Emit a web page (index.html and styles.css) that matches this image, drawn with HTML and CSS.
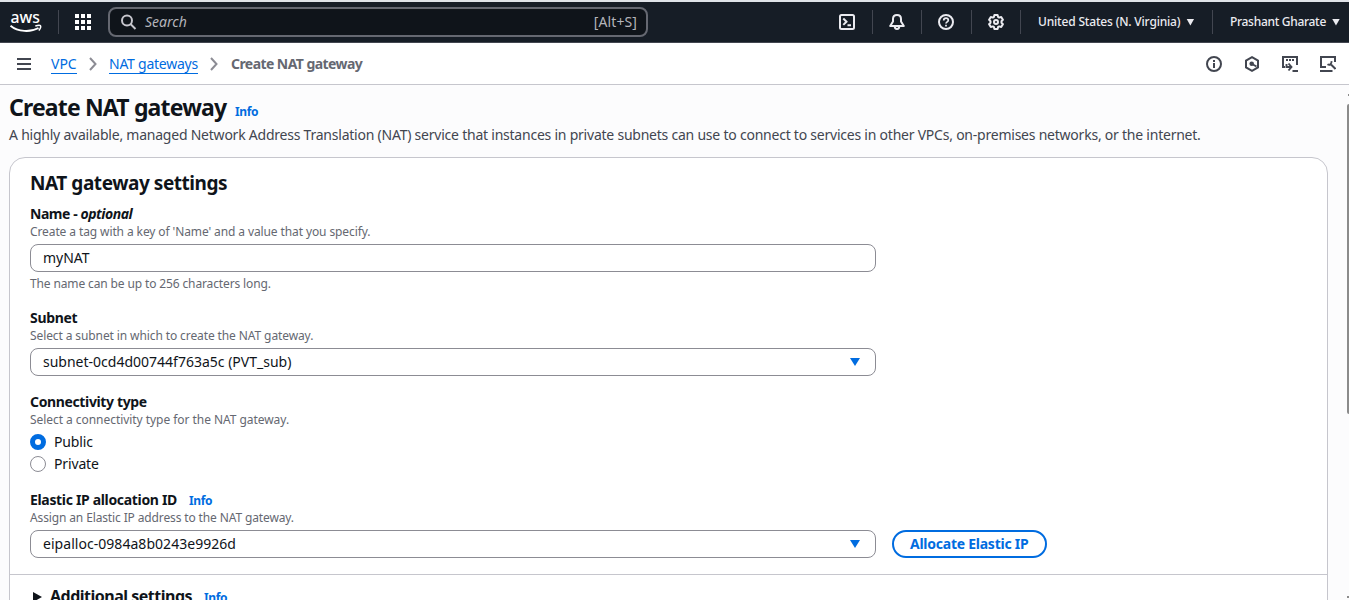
FILE: index.html
```
<!DOCTYPE html>
<html lang="en">
<head>
<meta charset="utf-8">
<title>Create NAT gateway</title>
<link rel="stylesheet" href="styles.css">
</head>
<body>
<header class="topbar">
  <svg class="logo" width="34" height="24" viewBox="0 0 34 24"><text class="logo-text" x="0.500" y="12.500" textLength="29.500" lengthAdjust="spacingAndGlyphs">aws</text><path d="M0.500 15.700C8 22 20.500 22.500 28.500 18" fill="none" stroke="#fff" stroke-width="1.900"/><path d="M25.300 16C28 15.200 30 15.100 30.500 15.800C31 16.600 30 19 28.800 20.500" fill="none" stroke="#fff" stroke-width="1.500"/></svg>
  <span class="rule rule-logo"></span>
  <svg class="grid-icon" width="16" height="16" viewBox="0 0 16 16" fill="#fff"><path d="M0 0h4v4H0zM6 0h4v4H6zM12 0h4v4h-4zM0 6h4v4H0zM6 6h4v4H6zM12 6h4v4h-4zM0 12h4v4H0zM6 12h4v4H6zM12 12h4v4h-4z"/></svg>
  <div class="search">
    <svg width="16" height="16" viewBox="0 0 16 16" fill="none" stroke="#c6c6cd" stroke-width="2"><circle cx="6" cy="6.500" r="5"/><path d="M9.500 10l5 5"/></svg>
    <span class="search-label">Search</span>
    <span class="t-key">[Alt+S]</span>
  </div>
  <div class="tools">
    <span class="tool"><svg width="16" height="16" viewBox="0 0 16 16" fill="none" stroke="#ebebf0" stroke-width="2"><rect x="1" y="1" width="14" height="14" rx="1.500"/><path d="M4.300 4.500L7.500 7.700l-3.200 3.200M8.500 11.200H12"/></svg></span>
    <span class="tool"><svg width="16" height="16" viewBox="0 0 16 16" fill="none" stroke="#ebebf0" stroke-width="2" stroke-linejoin="round"><path d="M8 1C5.300 1 4 2.800 4 5v2.500L1.200 12h13.600L12 7.500V5C12 2.800 10.700 1 8 1z"/><path d="M5.700 12c0 4 4.600 4 4.600 0"/></svg></span>
    <span class="tool"><svg width="16" height="16" viewBox="0 0 16 16" fill="none" stroke="#ebebf0" stroke-width="2"><circle cx="8" cy="8" r="7"/><path d="M5.700 6.500C5.700 3.200 10.300 3.500 10.300 6.200C10.300 7.900 8 7.800 8 9.600M8 10.700v1.700" stroke-width="1.700"/></svg></span>
    <span class="tool"><svg width="16" height="16" viewBox="0 0 16 16" fill="none" stroke="#ebebf0" stroke-width="2" stroke-linejoin="round"><path d="M6.400 1h3.200l.5 2 1.100.6 2-.6 1.700 2.800L13.500 7.300v1.400l1.400 1.500-1.700 2.800-2-.6-1.100.6-.5 2H6.400l-.5-2-1.100-.6-2 .6-1.700-2.800L2.500 8.700V7.300L1.100 5.800 2.800 3l2 .6L5.900 3z"/><circle cx="8" cy="8" r="2"/></svg></span>
    <span class="account region"><span class="t-region">United States (N. Virginia)</span><i class="caret"></i></span>
    <span class="account user"><span class="t-user">Prashant Gharate</span><i class="caret"></i></span>
  </div>
</header>
<nav class="crumbs">
  <svg class="menu" width="14" height="12" viewBox="0 0 14 12" fill="#424650"><path d="M0 0h14v2H0zM0 5h14v2H0zM0 10h14v2H0z"/></svg>
  <a class="crumb t-vpc">VPC</a>
  <svg class="chev" width="8" height="14" viewBox="0 0 8 14" fill="none" stroke="#8c8c94" stroke-width="2"><path d="M1 1l5.500 6L1 13"/></svg>
  <a class="crumb t-nat">NAT gateways</a>
  <svg class="chev" width="8" height="14" viewBox="0 0 8 14" fill="none" stroke="#8c8c94" stroke-width="2"><path d="M1 1l5.500 6L1 13"/></svg>
  <b class="t-current">Create NAT gateway</b>
  <div class="panel-icons">
    <svg width="16" height="16" viewBox="0 0 16 16" fill="none" stroke="#424650" stroke-width="2"><circle cx="8" cy="8" r="7"/><path d="M8 7v5M8 4v2"/></svg>
    <svg width="16" height="16" viewBox="0 0 16 16" fill="none" stroke="#424650" stroke-width="2"><path d="M8 1.200l6 3.300v7L8 14.800l-6-3.300v-7z"/><circle cx="7.700" cy="7.800" r="2.300" fill="#424650" stroke="none"/><path d="M8 8l4.500 2.500"/></svg>
    <svg width="16" height="16" viewBox="0 0 16 16" fill="none" stroke="#424650" stroke-width="2"><path d="M3 11H1V1h14v8M4 4h2M7 4h2M10 4h2"/><path d="M4.500 8v3h5M6.500 7.500L9.500 11l-3 3.500M10.500 15H16" stroke-width="1.900"/></svg>
    <svg width="16" height="16" viewBox="0 0 16 16" fill="none" stroke="#424650" stroke-width="2"><path d="M6 11H1V1h14v5M0 15h12.500"/><path d="M11 8.500l4.500 4.500"/><path d="M7.500 8.200c2 1.300 4.300.3 4-3" stroke-width="1.900"/></svg>
  </div>
</nav>
<main class="content">
  <div class="title"><h1><span class="t-h1">Create NAT gateway</span></h1><a class="info">Info</a></div>
  <p class="desc"><span class="t-desc">A highly available, managed Network Address Translation (NAT) service that instances in private subnets can use to connect to services in other VPCs, on-premises networks, or the internet.</span></p>
  <section class="card">
    <h2><span class="t-h2">NAT gateway settings</span></h2>
    <div class="field name">
      <label><span class="t-name">Name - <em>optional</em></span></label>
      <p class="hint"><span class="t-hint1">Create a tag with a key of 'Name' and a value that you specify.</span></p>
      <div class="input"><span class="t-my">myNAT</span></div>
      <p class="hint after"><span class="t-hint2">The name can be up to 256 characters long.</span></p>
    </div>
    <div class="field subnet">
      <label><span class="t-subnet">Subnet</span></label>
      <p class="hint"><span class="t-hint3">Select a subnet in which to create the NAT gateway.</span></p>
      <div class="input"><span class="t-sub">subnet-0cd4d00744f763a5c (PVT_sub)</span><i class="caret blue"></i></div>
    </div>
    <div class="field type">
      <label><span class="t-type">Connectivity type</span></label>
      <p class="hint"><span class="t-hint4">Select a connectivity type for the NAT gateway.</span></p>
      <div class="radio"><i class="dot on"></i><span class="t-radio">Public</span></div>
      <div class="radio"><i class="dot"></i><span class="t-radio">Private</span></div>
    </div>
    <div class="field eip">
      <label><span class="t-eip">Elastic IP allocation ID</span><a class="info">Info</a></label>
      <p class="hint"><span class="t-hint5">Assign an Elastic IP address to the NAT gateway.</span></p>
      <div class="row"><div class="input"><span class="t-alloc">eipalloc-0984a8b0243e9926d</span><i class="caret blue"></i></div><button class="button"><span class="t-btn">Allocate Elastic IP</span></button></div>
    </div>
    <div class="more"><i class="tri"></i><span class="t-more">Additional settings</span><a class="info">Info</a></div>
  </section>
  <div class="scrollbar"><i class="arrow-up"></i><i class="thumb"></i><i class="arrow-down"></i></div>
</main>
</body>
</html>
```
FILE: styles.css
```
* { box-sizing: border-box; }
body { margin: 0; height: 600px; overflow: hidden; font: 14px/20px "Noto Sans", "Open Sans", sans-serif; color: #0f141a; background: #fcfcfd; display: flex; flex-direction: column; }
h1, h2, p { margin: 0; }
svg { display: block; flex: none; }
span { white-space: nowrap; }
.topbar { height: 43px; flex: none; border-top: 2px solid #dfe3e8; border-bottom: 1px solid #424650; background: #161d26; display: flex; align-items: center; color: #ebebf0; }
.logo { margin-left: 10px; overflow: visible; }
.logo-text { font: 500 17px "Noto Sans", sans-serif; fill: #fff; }
.rule { width: 1px; height: 24px; background: #424650; margin-left: 14px; }
.grid-icon { margin-left: 16px; }
.search { margin-left: 17px; width: 540px; height: 30px; border: 2px solid #656871; border-radius: 8px; background: #0f141a; display: flex; align-items: center; padding: 0 9px 0 11px; color: #b4b4bb; }
.search-label { margin-left: 8px; font-style: italic; flex: 1; }
.tools { margin-left: auto; display: flex; align-items: center; }
.tool { width: 49.500px; height: 24px; border-right: 1px solid #424650; display: flex; align-items: center; justify-content: center; }
.account { display: flex; align-items: center; height: 24px; font-size: 12px; font-weight: 500; }
.region { width: 192px; padding-left: 17px; border-right: 1px solid #424650; }
.user { width: 136px; padding-left: 17px; }
.caret { width: 8px; height: 7px; background: currentColor; clip-path: polygon(0 0, 100% 0, 50% 100%); margin-left: 6px; flex: none; }
.crumbs { height: 42px; flex: none; background: #fff; border-bottom: 1px solid #c6c6cd; display: flex; align-items: center; padding-left: 17px; }
.crumb { color: #006ce0; border-bottom: 1px solid #006ce0; line-height: 18px; width: 26px; margin: 1px 0 0 20px; white-space: nowrap; }
.crumb.t-nat { width: 89px; margin-left: 12px; }
.chev { margin-left: 12px; }
.crumbs b { color: #656871; margin-left: 13px; white-space: nowrap; }
.panel-icons { margin-left: auto; display: flex; gap: 22px; padding-right: 13px; }
.content { flex: 1; min-height: 0; overflow: hidden; position: relative; padding: 8px 21px 0 9px; }
.title { display: flex; align-items: baseline; height: 28px; }
h1 { font-size: 23px; line-height: 28px; width: 226px; }
.info { color: #006ce0; font-size: 12px; font-weight: 700; letter-spacing: -0.35px; }
.desc { margin-top: 4px; color: #424650; }
.card { margin-top: 12px; border: 1px solid #c6c6cd; border-radius: 16px; background: #fff; height: 480px; padding: 13px 20px; }
h2 { font-size: 19px; line-height: 25px; }
.field label { display: flex; align-items: baseline; font-weight: 700; height: 20px; }
.name { margin-top: 8px; }
.hint { font-size: 12px; line-height: 16px; color: #656871; }
.input { width: 846px; height: 28px; margin-top: 4px; border: 1px solid #8c8c94; border-radius: 8px; display: flex; align-items: center; padding: 0 15px 0 12px; justify-content: space-between; background: #fff; }
.after { margin-top: 4px; }
.subnet { margin-top: 16px; }
.type { margin-top: 16px; }
.blue { color: #006ce0; width: 10px; height: 8px; }
.radio { display: flex; align-items: center; height: 22px; gap: 8px; }
.type .hint { margin-bottom: 3px; }
.dot { width: 16px; height: 16px; border: 1px solid #8c8c94; border-radius: 50%; }
.on { border: 5px solid #006ce0; }
.eip { margin-top: 15px; }
.eip .info { margin-left: 12px; }
.row { display: flex; align-items: flex-end; gap: 16px; }
.button { width: 155px; height: 28px; border: 2px solid #006ce0; border-radius: 14px; background: #fff; color: #006ce0; font: 700 14px/20px "Noto Sans", sans-serif; padding: 0 16px; text-align: left; }
.more { margin: 16px -20px 0; border-top: 1px solid #c6c6cd; padding: 9px 0 0 23px; display: flex; align-items: baseline; font-size: 16px; line-height: 24px; font-weight: 700; }
.tri { width: 9px; height: 10px; background: #0f141a; clip-path: polygon(0 0, 100% 50%, 0 100%); margin: 0 8px 1px 0; }
.more .info { margin-left: 12px; }
.scrollbar { position: absolute; right: 0; top: 0; bottom: 0; width: 2px; }
.arrow-up, .arrow-down, .thumb { position: absolute; right: 0; background: #8b8b8b; }
.arrow-up { top: 9px; width: 1px; height: 2px; }
.thumb { top: 19px; width: 2px; height: 310px; border-radius: 2px 0 0 2px; }
.arrow-down { bottom: 2px; width: 2px; height: 2px; }

/* Tracking per text run */
.t-region { letter-spacing: -0.18px; }
.t-user { letter-spacing: -0.3px; }
.t-key { letter-spacing: 0.1px; }
.t-nat { letter-spacing: -0.25px; }
.t-current { letter-spacing: -0.56px; }
.t-h1 { letter-spacing: -0.83px; }
.t-desc { letter-spacing: -0.229px; }
.t-h2 { letter-spacing: -0.45px; }
.t-name { letter-spacing: -0.45px; }
.t-hint1, .t-hint3 { letter-spacing: -0.105px; }
.t-hint2, .t-hint5 { letter-spacing: -0.13px; }
.t-hint4 { letter-spacing: -0.05px; }
.t-subnet, .t-eip { letter-spacing: -0.33px; }
.t-type { letter-spacing: -0.36px; }
.t-radio { letter-spacing: -0.15px; }
.t-alloc { letter-spacing: 0.04px; }
.t-btn { letter-spacing: -0.25px; }
.t-more { letter-spacing: -0.5px; }
```
